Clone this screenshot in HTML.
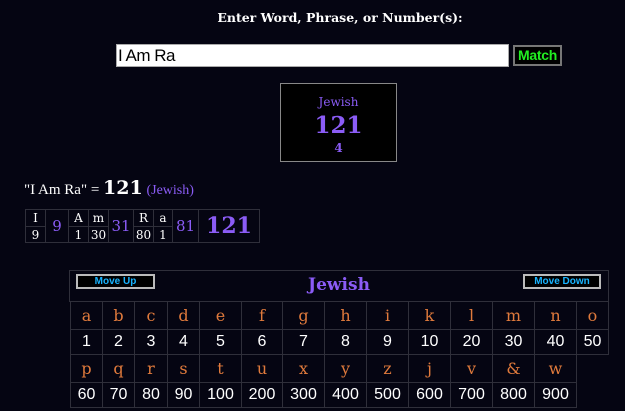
<!DOCTYPE html>
<html><head><style>
*{margin:0;padding:0;box-sizing:border-box}
body{width:625px;height:411px;background:#050512;position:relative;overflow:hidden;font-family:"DejaVu Serif",serif;color:#fff}
.a{position:absolute}
.t{position:absolute;border-collapse:collapse;table-layout:fixed}
.t td{border:1px solid #2f2f3a;text-align:center;padding:0}
.p{color:#8b5cf6}
.o{color:#e07a3c}
.btn{position:absolute;height:15px;background:#000;border:2px solid #bbb;color:#18b4ff;font:bold 10px "Liberation Sans",sans-serif;text-align:center;line-height:11px}
</style></head><body>
<div class="a" style="left:0;width:680px;top:10px;text-align:center;font:bold 12.5px 'DejaVu Serif',serif">Enter Word, Phrase, or Number(s):</div>
<div class="a" style="left:116px;top:44px;width:393px;height:23px;background:#fff;border:1px solid #aaa;color:#000;font:17px 'Liberation Sans',sans-serif;line-height:21px;padding-left:1px;letter-spacing:-0.5px">I Am Ra</div>
<div class="a" style="left:513px;top:45px;width:49px;height:21px;background:#000;border:2px solid #777;color:#22ee22;font:bold 14px 'Liberation Sans',sans-serif;text-align:center;line-height:17px;letter-spacing:-0.3px">Match</div>
<div class="a" style="left:280px;top:83px;width:117px;height:79px;background:#000;border:1px solid #888;text-align:center">
<div class="p" style="font-size:12px;margin-top:11px;line-height:14px">Jewish</div>
<div class="p" style="font-size:23px;font-weight:bold;line-height:28px;margin-top:3px">121</div>
<div class="p" style="font-size:12px;font-weight:bold;line-height:16px">4</div>
</div>
<div class="a" style="left:24px;top:177px;font-size:15px;font-family:'Liberation Serif',serif">"I Am Ra" = <b style="font-size:19px;font-family:'DejaVu Serif',serif">121</b> <span class="p" style="font-size:14px">(Jewish)</span></div>
<table class="t" style="left:25px;top:209px;width:234px;height:33px;font-size:12px">
<colgroup><col style="width:20px"><col style="width:23px"><col style="width:20px"><col style="width:20px"><col style="width:25px"><col style="width:20px"><col style="width:19px"><col style="width:26px"><col style="width:61px"></colgroup>
<tr style="height:17px"><td>I</td><td rowspan="2" class="p" style="font-size:15px">9</td><td>A</td><td>m</td><td rowspan="2" class="p" style="font-size:15px">31</td><td>R</td><td>a</td><td rowspan="2" class="p" style="font-size:15px">81</td><td rowspan="2" class="p" style="font-size:22px;font-weight:bold">121</td></tr>
<tr style="height:16px"><td>9</td><td>1</td><td>30</td><td>80</td><td>1</td></tr>
</table>
<div class="a" style="left:69px;top:270px;width:540px;height:32px;border:1px solid #2f2f3a;border-bottom:none"></div>
<div class="a p" style="left:69px;width:540px;top:275px;text-align:center;font-size:17px;font-weight:bold">Jewish</div>
<div class="btn" style="left:76px;top:274px;width:79px">Move Up</div>
<div class="btn" style="left:523px;top:274px;width:78px">Move Down</div>
<table class="t" style="left:70px;top:301px;width:538px;height:53px;font-size:16px">
<colgroup><col style="width:32px"><col style="width:32px"><col style="width:33px"><col style="width:32px"><col style="width:42px"><col style="width:41px"><col style="width:42px"><col style="width:42px"><col style="width:42px"><col style="width:42px"><col style="width:42px"><col style="width:42px"><col style="width:42px"><col style="width:32px"></colgroup>
<tr style="height:28px" class="o"><td>a</td><td>b</td><td>c</td><td>d</td><td>e</td><td>f</td><td>g</td><td>h</td><td>i</td><td>k</td><td>l</td><td>m</td><td>n</td><td>o</td></tr>
<tr style="height:25px;font-size:16px;font-family:'Liberation Sans',sans-serif"><td>1</td><td>2</td><td>3</td><td>4</td><td>5</td><td>6</td><td>7</td><td>8</td><td>9</td><td>10</td><td>20</td><td>30</td><td>40</td><td>50</td></tr>
</table>
<table class="t" style="left:70px;top:354px;width:506px;height:53px;font-size:16px">
<colgroup><col style="width:32px"><col style="width:32px"><col style="width:33px"><col style="width:32px"><col style="width:42px"><col style="width:41px"><col style="width:42px"><col style="width:42px"><col style="width:42px"><col style="width:42px"><col style="width:42px"><col style="width:42px"><col style="width:42px"></colgroup>
<tr style="height:28px" class="o"><td>p</td><td>q</td><td>r</td><td>s</td><td>t</td><td>u</td><td>x</td><td>y</td><td>z</td><td>j</td><td>v</td><td>&amp;</td><td>w</td></tr>
<tr style="height:25px;font-size:16px;font-family:'Liberation Sans',sans-serif"><td>60</td><td>70</td><td>80</td><td>90</td><td>100</td><td>200</td><td>300</td><td>400</td><td>500</td><td>600</td><td>700</td><td>800</td><td>900</td></tr>
</table>
</body></html>
